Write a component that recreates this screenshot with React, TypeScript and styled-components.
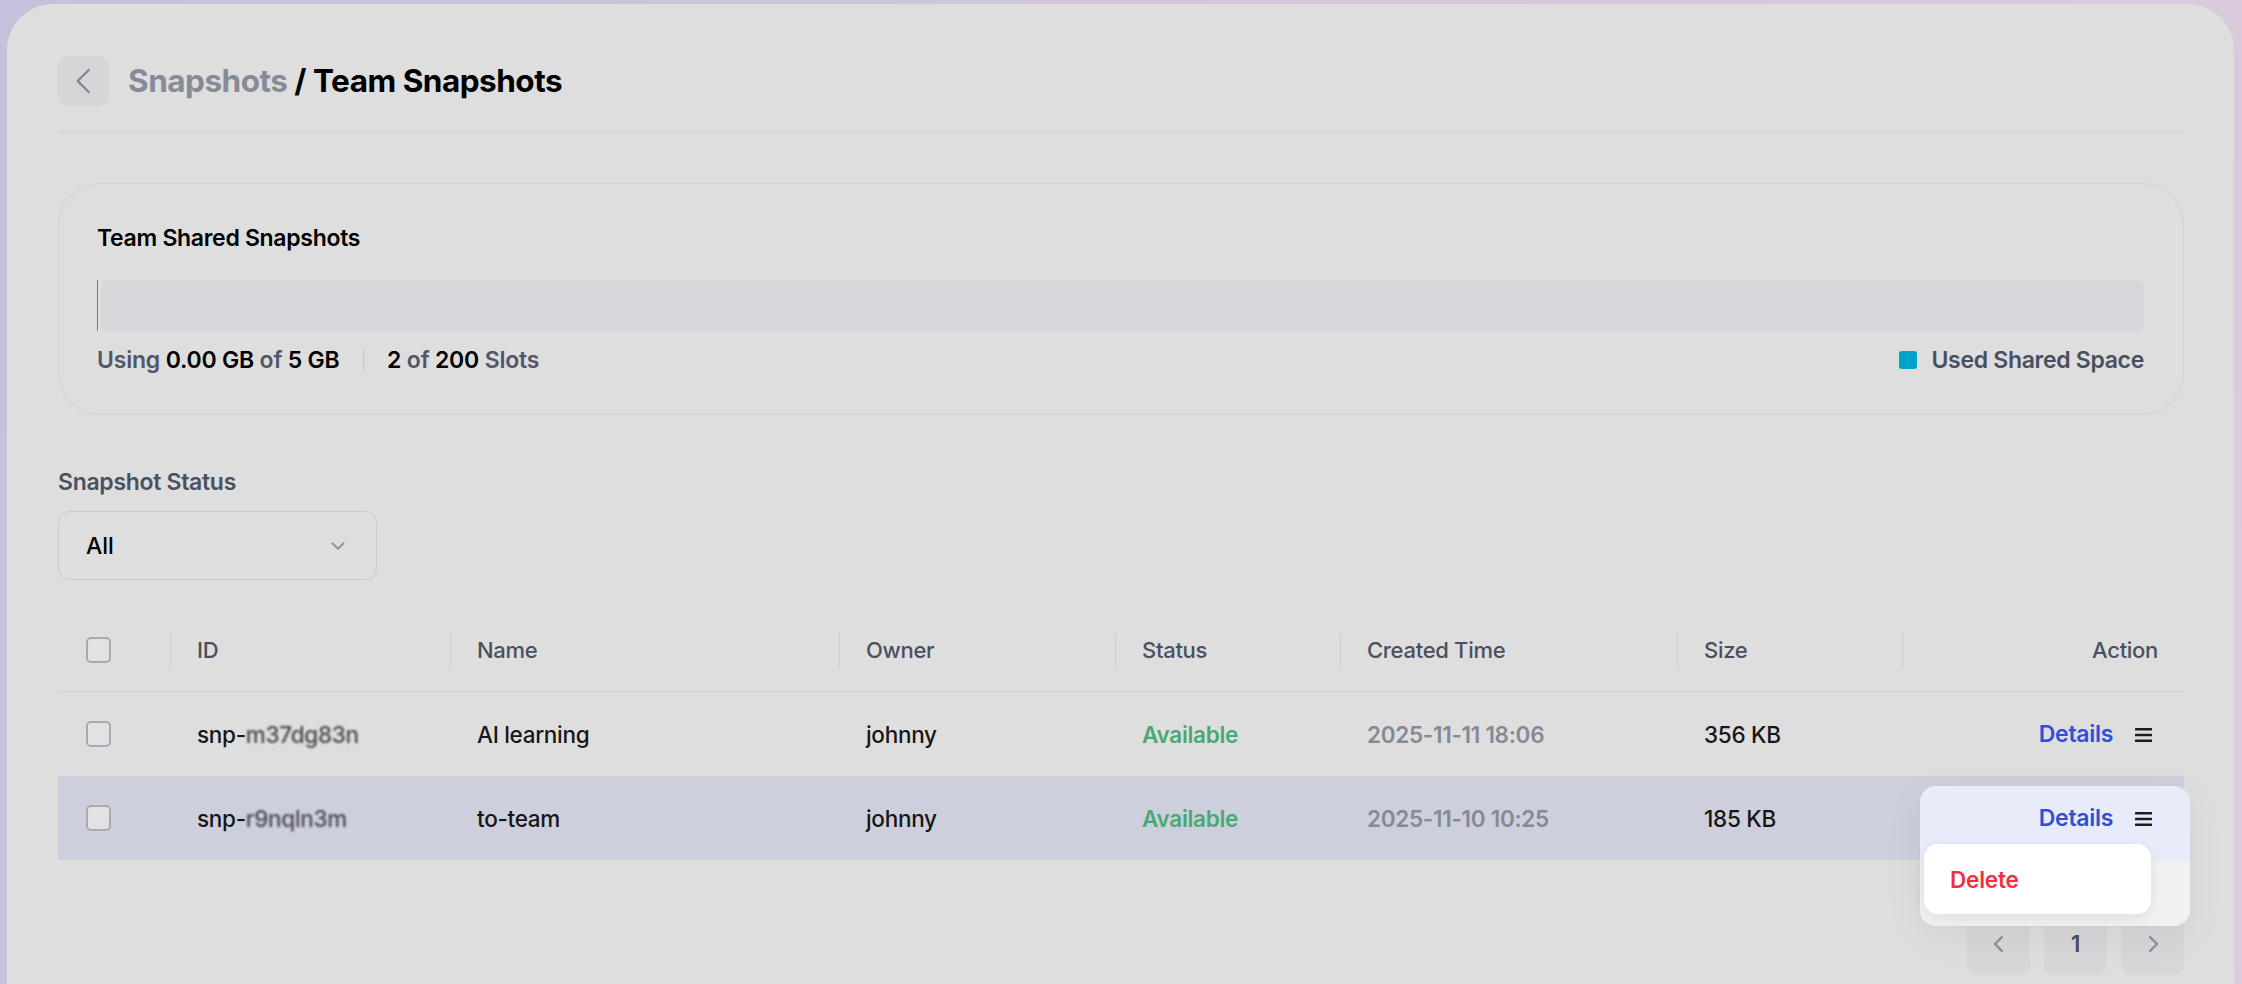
import React from "react";
import styled, { createGlobalStyle } from "styled-components";

const Global = createGlobalStyle`
  html, body { margin: 0; padding: 0; overflow: hidden; }
  body { font-family: Inter, "Noto Sans", "Liberation Sans", sans-serif; }
  * { box-sizing: border-box; }
`;

const Page = styled.div`
  height: 984px;
  width: 100%;
  padding: 4px 8px 0 7px;
  background: linear-gradient(100deg, #c6c0dd 0%, #d4c8dc 60%, #dacbdd 100%);
  overflow: hidden;
`;

const Panel = styled.div`
  background: #dedede;
  border-radius: 46px 46px 0 0;
  padding: 52px 50px 0 51px;
  min-height: 1100px;
`;

const Header = styled.div`
  display: flex;
  align-items: center;
  gap: 19px;
  padding-bottom: 26px;
  border-bottom: 1px solid #d2d2d3;
`;

const BackButton = styled.div`
  width: 51px;
  height: 50px;
  border-radius: 10px;
  background: #d6d6d8;
  display: flex;
  align-items: center;
  justify-content: center;
  color: #7f8492;
`;

const Title = styled.h1`
  margin: 0;
  font-size: 31.5px;
  line-height: 40px;
  font-weight: 700;
  letter-spacing: -0.5px;
  color: #000;
`;

const Crumb = styled.span`
  color: #868b97;
`;

const Card = styled.section`
  margin-top: 50px;
  border: 1px solid #d3d3d4;
  border-radius: 42px;
  padding: 40px 39px 39px 38px;
`;

const CardTitle = styled.div`
  font-size: 23px;
  line-height: 28px;
  font-weight: 600;
  color: #000;
  letter-spacing: -0.3px;
`;

const Bar = styled.div`
  margin-top: 28px;
  height: 51px;
  display: flex;
  gap: 3px;
`;

const BarFill = styled.div`
  width: 1px;
  background: #00a3c9;
`;

const BarTrack = styled.div`
  flex: 1;
  background: #d6d7da;
  border-radius: 7px;
`;

const UsageRow = styled.div`
  margin-top: 14px;
  display: flex;
  align-items: center;
  justify-content: space-between;
  height: 30px;
`;

const Usage = styled.div`
  display: flex;
  align-items: center;
  font-size: 23px;
  font-weight: 600;
  color: #525767;
  letter-spacing: -0.2px;
  white-space: pre;
`;

const Strong = styled.span`
  color: #000;
`;

const Sep = styled.span`
  width: 1.5px;
  height: 22px;
  background: #c9c9cb;
  margin: 0 23px;
`;

const Legend = styled.div`
  display: flex;
  align-items: center;
  gap: 14px;
  font-size: 23px;
  font-weight: 600;
  color: #4a4f5f;
  letter-spacing: -0.3px;
`;

const Swatch = styled.span`
  width: 18px;
  height: 18px;
  border-radius: 3px;
  background: #00a3c9;
`;

const FilterLabel = styled.div`
  margin-top: 52px;
  font-size: 23px;
  line-height: 30px;
  font-weight: 600;
  color: #4b5060;
  letter-spacing: -0.3px;
`;

const Select = styled.div`
  margin-top: 14px;
  width: 319px;
  height: 69px;
  border: 1px solid #cbcbcd;
  border-radius: 12px;
  display: flex;
  align-items: center;
  justify-content: space-between;
  padding: 0 27px 0 27px;
  font-size: 23px;
  font-weight: 500;
  color: #000;
`;

const SelectChevron = styled.span`
  color: #8b909b;
  display: flex;
`;

const TableWrap = styled.div`
  position: relative;
  margin-top: 28px;
`;

const COLS = "112px 280px 389px 276px 225px 337px 225px 1fr";

const HeadRow = styled.div`
  display: grid;
  grid-template-columns: ${COLS};
  height: 84px;
  align-items: center;
  border-bottom: 1.5px solid #cfcfd1;
`;

const HeadCell = styled.div<{ $sep?: boolean; $right?: boolean }>`
  position: relative;
  padding: 0 26px 0 27px;
  font-size: 22px;
  font-weight: 500;
  letter-spacing: -0.3px;
  color: #4a5060;
  text-align: ${(p) => (p.$right ? "right" : "left")};
  &::before {
    content: "";
    display: ${(p) => (p.$sep ? "block" : "none")};
    position: absolute;
    left: 0;
    top: 50%;
    width: 1px;
    height: 35px;
    margin-top: -17px;
    background: #cdcdcf;
  }
`;

const Row = styled.div<{ $active?: boolean }>`
  display: grid;
  grid-template-columns: ${COLS};
  height: 84px;
  align-items: center;
  background: ${(p) => (p.$active ? "#cdcfdc" : "transparent")};
`;

const Cell = styled.div<{ $tone?: "muted" | "green"; $right?: boolean }>`
  padding: 0 ${(p) => (p.$right ? "32px" : "26px")} 0 27px;
  font-size: 22.5px;
  letter-spacing: -0.3px;
  color: ${(p) =>
    p.$tone === "muted" ? "#858a96" : p.$tone === "green" ? "#4aa873" : "#161616"};
  font-weight: ${(p) => (p.$tone ? 600 : 500)};
  white-space: nowrap;
  display: flex;
  justify-content: ${(p) => (p.$right ? "flex-end" : "flex-start")};
  align-items: center;
`;

const CheckCell = styled.div`
  padding-left: 28px;
  display: flex;
  align-items: center;
`;

const Checkbox = styled.span`
  width: 25px;
  height: 26px;
  border: 2px solid #a9a9af;
  border-radius: 5px;
  background: #e2e2e4;
`;

const Masked = styled.span`
  filter: blur(1.3px);
  color: #4a4a52;
`;

const Actions = styled.div`
  display: flex;
  align-items: center;
  gap: 22px;
`;

const DetailsLink = styled.span`
  font-size: 23px;
  font-weight: 600;
  color: #2f4fd6;
  letter-spacing: -0.3px;
`;

const MenuIcon = styled.span`
  display: flex;
  color: #1c1c1c;
`;

const Popover = styled.div`
  position: absolute;
  top: 178px;
  right: -6px;
  width: 270px;
  height: 140px;
  border-radius: 16px;
  background: linear-gradient(to bottom, #e8ecfa 0, #e8ecfa 75px, #f1f1f2 75px);
  box-shadow: 0 10px 40px rgba(0, 0, 0, 0.06);
  padding: 0 0 0 4px;
`;

const PopoverActions = styled.div`
  height: 64px;
  display: flex;
  align-items: center;
  justify-content: flex-end;
  padding-right: 38px;
`;

const Menu = styled.div`
  margin-top: -6px;
  width: 227px;
  height: 70px;
  background: #ffffff;
  border-radius: 14px;
  box-shadow: 0 4px 14px rgba(0, 0, 0, 0.08);
  display: flex;
  align-items: center;
  padding-left: 26px;
`;

const DeleteItem = styled.span`
  font-size: 22.5px;
  font-weight: 600;
  letter-spacing: -0.2px;
  color: #f42f42;
`;

const Pagination = styled.div`
  margin-top: 52px;
  display: flex;
  justify-content: flex-end;
  gap: 14px;
`;

const PageButton = styled.div<{ $current?: boolean }>`
  width: 63px;
  height: 63px;
  border-radius: 9px;
  background: #d7d7d9;
  display: flex;
  align-items: center;
  justify-content: center;
  font-size: 23px;
  font-weight: 600;
  color: ${(p) => (p.$current ? "#4a5060" : "#868b97")};
`;

const Chevron = ({
  dir,
  size,
  stroke = 2,
}: {
  dir: "left" | "right" | "down";
  size: number;
  stroke?: number;
}) => {
  const d =
    dir === "left" ? "M15 5l-7 7 7 7" : dir === "right" ? "M9 5l7 7-7 7" : "M6 9l6 6 6-6";
  return (
    <svg width={size} height={size} viewBox="0 0 24 24" fill="none">
      <path d={d} stroke="currentColor" strokeWidth={stroke} strokeLinecap="round" strokeLinejoin="round" />
    </svg>
  );
};

const Hamburger = () => (
  <svg width="17" height="16" viewBox="0 0 17 16">
    <rect x="0" y="2" width="17" height="2.6" rx="0.6" fill="currentColor" />
    <rect x="0" y="7.7" width="17" height="2.6" rx="0.6" fill="currentColor" />
    <rect x="0" y="13.4" width="17" height="2.6" rx="0.6" fill="currentColor" />
  </svg>
);

const ActionGroup = () => (
  <Actions>
    <DetailsLink>Details</DetailsLink>
    <MenuIcon>
      <Hamburger />
    </MenuIcon>
  </Actions>
);

const rows = [
  { id: "m37dg83n", name: "AI learning", owner: "johnny", status: "Available", time: "2025-11-11 18:06", size: "356 KB" },
  { id: "r9nqln3m", name: "to-team", owner: "johnny", status: "Available", time: "2025-11-10 10:25", size: "185 KB" },
];

const headers = ["ID", "Name", "Owner", "Status", "Created Time", "Size"];

export default function App() {
  return (
    <>
      <Global />
      <Page>
        <Panel>
          <Header>
            <BackButton>
              <Chevron dir="left" size={38} stroke={1.4} />
            </BackButton>
            <Title>
              <Crumb>Snapshots</Crumb> / Team Snapshots
            </Title>
          </Header>

          <Card>
            <CardTitle>Team Shared Snapshots</CardTitle>
            <Bar>
              <BarFill />
              <BarTrack />
            </Bar>
            <UsageRow>
              <Usage>
                Using <Strong>0.00 GB</Strong> of <Strong>5 GB</Strong>
                <Sep />
                <Strong>2</Strong> of <Strong>200</Strong> Slots
              </Usage>
              <Legend>
                <Swatch />
                Used Shared Space
              </Legend>
            </UsageRow>
          </Card>

          <FilterLabel>Snapshot Status</FilterLabel>
          <Select>
            All
            <SelectChevron>
              <Chevron dir="down" size={22} />
            </SelectChevron>
          </Select>

          <TableWrap>
            <HeadRow>
              <CheckCell>
                <Checkbox />
              </CheckCell>
              {headers.map((h) => (
                <HeadCell key={h} $sep>
                  {h}
                </HeadCell>
              ))}
              <HeadCell $sep $right>
                Action
              </HeadCell>
            </HeadRow>
            {rows.map((r, i) => (
              <Row key={r.id} $active={i === 1}>
                <CheckCell>
                  <Checkbox />
                </CheckCell>
                <Cell>
                  snp-<Masked>{r.id}</Masked>
                </Cell>
                <Cell>{r.name}</Cell>
                <Cell>{r.owner}</Cell>
                <Cell $tone="green">{r.status}</Cell>
                <Cell $tone="muted">{r.time}</Cell>
                <Cell>{r.size}</Cell>
                <Cell $right>
                  <ActionGroup />
                </Cell>
              </Row>
            ))}
            <Popover>
              <PopoverActions>
                <ActionGroup />
              </PopoverActions>
              <Menu>
                <DeleteItem>Delete</DeleteItem>
              </Menu>
            </Popover>
          </TableWrap>

          <Pagination>
            <PageButton>
              <Chevron dir="left" size={24} />
            </PageButton>
            <PageButton $current>1</PageButton>
            <PageButton>
              <Chevron dir="right" size={24} />
            </PageButton>
          </Pagination>
        </Panel>
      </Page>
    </>
  );
}
